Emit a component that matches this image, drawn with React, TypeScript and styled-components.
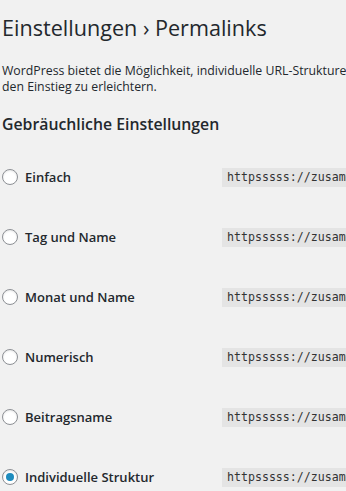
import React from 'react';
import styled, { createGlobalStyle } from 'styled-components';

const GlobalStyle = createGlobalStyle`
  html, body {
    margin: 0;
    padding: 0;
    background: #f1f1f1;
    overflow: hidden;
  }
  body {
    font-family: "Open Sans", "Noto Sans", sans-serif;
    color: #23282d;
  }
`;

const Page = styled.div`
  width: 346px;
  height: 491px;
  overflow: hidden;
  padding-left: 2px;
  box-sizing: border-box;
`;

const Title = styled.h1`
  margin: 0;
  padding-top: 12px;
  font-size: 21.6px;
  font-weight: 400;
  line-height: 32px;
  white-space: nowrap;
`;

const Intro = styled.p`
  margin: 19px 0 0;
  font-size: 12.3px;
  line-height: 16px;
  white-space: nowrap;
`;

const SectionTitle = styled.h2`
  margin: 17px 0 0;
  font-size: 15.8px;
  font-weight: 600;
  line-height: 24px;
  white-space: nowrap;
`;

const Options = styled.div`
  margin-top: 31px;
  display: flex;
  flex-direction: column;
  gap: 40px;
`;

const Row = styled.div`
  display: grid;
  grid-template-columns: 220px 1fr;
  align-items: center;
  height: 20px;
`;

const Choice = styled.label`
  display: flex;
  align-items: center;
  gap: 7px;
  font-size: 13px;
  font-weight: 600;
  white-space: nowrap;
`;

const Radio = styled.span<{ $checked?: boolean }>`
  width: 16px;
  height: 16px;
  box-sizing: border-box;
  border-radius: 50%;
  border: 1px solid #8c8f94;
  background: #fff;
  display: flex;
  align-items: center;
  justify-content: center;
  box-shadow: inset 0 1px 2px rgba(0, 0, 0, 0.1);
  &::after {
    content: '';
    display: ${p => (p.$checked ? 'block' : 'none')};
    width: 8px;
    height: 8px;
    border-radius: 50%;
    background: #1e8cbe;
  }
`;

const Code = styled.code`
  display: block;
  background: #e4e4e4;
  font-family: "DejaVu Sans Mono", "Liberation Mono", monospace;
  font-size: 11.6px;
  line-height: 19px;
  padding: 0 5px;
  white-space: nowrap;
  overflow: hidden;
  color: #333;
`;

const options = [
  { label: 'Einfach' },
  { label: 'Tag und Name' },
  { label: 'Monat und Name' },
  { label: 'Numerisch' },
  { label: 'Beitragsname' },
  { label: 'Individuelle Struktur', checked: true },
];

export default function App() {
  return (
    <Page>
      <GlobalStyle />
      <Title>Einstellungen › Permalinks</Title>
      <Intro>
        WordPress bietet die Möglichkeit, individuelle URL-Strukturen für Permalinks und Archive anzulegen, um
        <br />
        den Einstieg zu erleichtern.
      </Intro>
      <SectionTitle>Gebräuchliche Einstellungen</SectionTitle>
      <Options>
        {options.map(o => (
          <Row key={o.label}>
            <Choice>
              <Radio $checked={o.checked} />
              {o.label}
            </Choice>
            <Code>httpsssss://zusammenfassung.de/</Code>
          </Row>
        ))}
      </Options>
    </Page>
  );
}
